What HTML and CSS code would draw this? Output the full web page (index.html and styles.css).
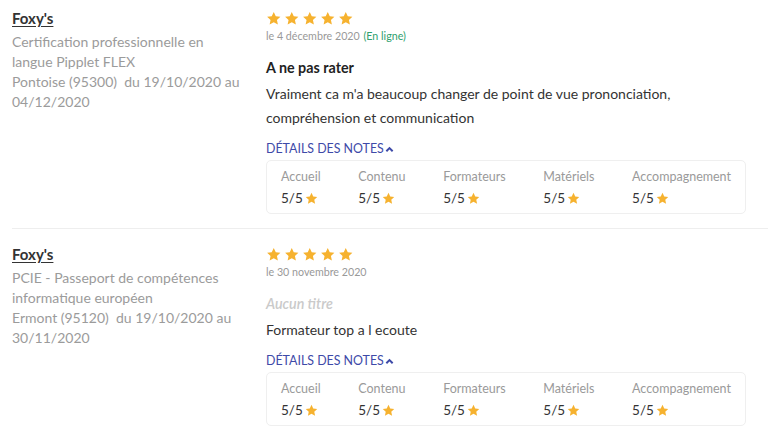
FILE: index.html
```html
<!DOCTYPE html>
<html lang="fr">
<head>
<meta charset="utf-8">
<link rel="stylesheet" href="styles.css">
</head>
<body>
<svg width="0" height="0" class="defs" aria-hidden="true">
  <defs>
    <path id="star" d="M12 1.5l3.2 6.9 7.4.8-5.5 5.1 1.5 7.4L12 17.9l-6.6 3.8 1.5-7.4L1.4 9.2l7.4-.8z"/>
  </defs>
</svg>
<div class="list">
  <div class="review">
    <div class="who">
      <a class="name" href="#">Foxy's</a>
      <p class="desc">Certification professionnelle en langue Pipplet FLEX<br>Pontoise (95300)&nbsp; du 19/10/2020 au 04/12/2020</p>
    </div>
    <div class="body">
      <div class="stars">
        <svg viewBox="0 0 24 24"><use href="#star"/></svg><svg viewBox="0 0 24 24"><use href="#star"/></svg><svg viewBox="0 0 24 24"><use href="#star"/></svg><svg viewBox="0 0 24 24"><use href="#star"/></svg><svg viewBox="0 0 24 24"><use href="#star"/></svg>
      </div>
      <div class="date">le 4 décembre 2020 <span class="online">(En ligne)</span></div>
      <h3 class="title">A ne pas rater</h3>
      <p class="text">Vraiment ca m'a beaucoup changer de point de vue prononciation, compréhension et communication</p>
      <a class="details" href="#">DÉTAILS DES NOTES<svg class="chev" viewBox="0 0 10 7"><path d="M1.5 5.5L5 2l3.5 3.5"/></svg></a>
      <div class="notes">
        <div class="note"><span class="label">Accueil</span><span class="val">5/5<svg viewBox="0 0 24 24"><use href="#star"/></svg></span></div>
        <div class="note"><span class="label">Contenu</span><span class="val">5/5<svg viewBox="0 0 24 24"><use href="#star"/></svg></span></div>
        <div class="note"><span class="label">Formateurs</span><span class="val">5/5<svg viewBox="0 0 24 24"><use href="#star"/></svg></span></div>
        <div class="note"><span class="label">Matériels</span><span class="val">5/5<svg viewBox="0 0 24 24"><use href="#star"/></svg></span></div>
        <div class="note"><span class="label">Accompagnement</span><span class="val">5/5<svg viewBox="0 0 24 24"><use href="#star"/></svg></span></div>
      </div>
    </div>
  </div>
  <div class="review">
    <div class="who">
      <a class="name" href="#">Foxy's</a>
      <p class="desc">PCIE - Passeport de compétences informatique européen<br>Ermont (95120)&nbsp; du 19/10/2020 au 30/11/2020</p>
    </div>
    <div class="body">
      <div class="stars">
        <svg viewBox="0 0 24 24"><use href="#star"/></svg><svg viewBox="0 0 24 24"><use href="#star"/></svg><svg viewBox="0 0 24 24"><use href="#star"/></svg><svg viewBox="0 0 24 24"><use href="#star"/></svg><svg viewBox="0 0 24 24"><use href="#star"/></svg>
      </div>
      <div class="date">le 30 novembre 2020</div>
      <h3 class="title empty">Aucun titre</h3>
      <p class="text">Formateur top a l ecoute</p>
      <a class="details" href="#">DÉTAILS DES NOTES<svg class="chev" viewBox="0 0 10 7"><path d="M1.5 5.5L5 2l3.5 3.5"/></svg></a>
      <div class="notes">
        <div class="note"><span class="label">Accueil</span><span class="val">5/5<svg viewBox="0 0 24 24"><use href="#star"/></svg></span></div>
        <div class="note"><span class="label">Contenu</span><span class="val">5/5<svg viewBox="0 0 24 24"><use href="#star"/></svg></span></div>
        <div class="note"><span class="label">Formateurs</span><span class="val">5/5<svg viewBox="0 0 24 24"><use href="#star"/></svg></span></div>
        <div class="note"><span class="label">Matériels</span><span class="val">5/5<svg viewBox="0 0 24 24"><use href="#star"/></svg></span></div>
        <div class="note"><span class="label">Accompagnement</span><span class="val">5/5<svg viewBox="0 0 24 24"><use href="#star"/></svg></span></div>
      </div>
    </div>
  </div>
</div>
</body>
</html>
```
FILE: styles.css
```css
* { box-sizing: border-box; }
html, body { margin: 0; padding: 0; background: #fff; }
body { font-family: Lato, "Open Sans", sans-serif; color: #333; }
.defs { position: absolute; width: 0; height: 0; }
.list { padding-left: 12px; }
.review {
  display: flex;
  padding: 15px 0 15px;
  border-bottom: 1px solid #eeeeee;
}
.review:first-child { padding-top: 8px; padding-bottom: 14px; }
.review:last-child { border-bottom: none; }
.who { width: 254px; flex: none; padding-right: 23px; }
.name {
  display: block;
  font-size: 15px;
  line-height: 20px;
  font-weight: 700;
  color: #333;
  text-decoration: underline;
  text-underline-offset: 2px;
}
.desc {
  margin: 4px 0 0;
  font-size: 14px;
  line-height: 20px;
  color: #9b9b9b;
}
.body { width: 480px; flex: none; }
.stars { display: flex; gap: 2.5px; height: 14px; margin-top: 4px; }
.stars svg { width: 15.5px; height: 15px; fill: #f6b22f; margin-top: -1px; }
.date { margin-top: 3px; font-size: 10.7px; line-height: 14px; color: #999; }
.online { color: #2f9f6e; margin-left: 1px; }
.title {
  margin: 15px 0 0;
  font-size: 14.3px;
  line-height: 20px;
  font-weight: 700;
  color: #222;
}
.title.empty { font-style: italic; color: #cacaca; font-weight: 600; }
.text { margin: 4px 0 0; font-size: 14px; line-height: 24px; color: #333; }
.details {
  display: flex;
  align-items: center;
  margin-top: 11px;
  font-size: 12.4px;
  line-height: 16px;
  color: #3e4aa8;
  text-decoration: none;
}
.chev { width: 9px; height: 7px; margin-left: 1px; fill: none; stroke: #3e4aa8; stroke-width: 2.2; }
.notes {
  display: flex;
  justify-content: space-between;
  margin-top: 3px;
  padding: 7px 14px 5px 14px;
  border: 1px solid #efefef;
  border-radius: 5px;
}
.note { display: flex; flex-direction: column; }
.label { font-size: 12.5px; line-height: 18px; color: #9a9a9a; }
.val {
  display: flex;
  align-items: center;
  font-size: 13.5px;
  line-height: 20px;
  color: #333;
  margin-top: 2px;
}
.val svg { width: 13px; height: 13px; fill: #f6b22f; margin-left: 2px; }
```
